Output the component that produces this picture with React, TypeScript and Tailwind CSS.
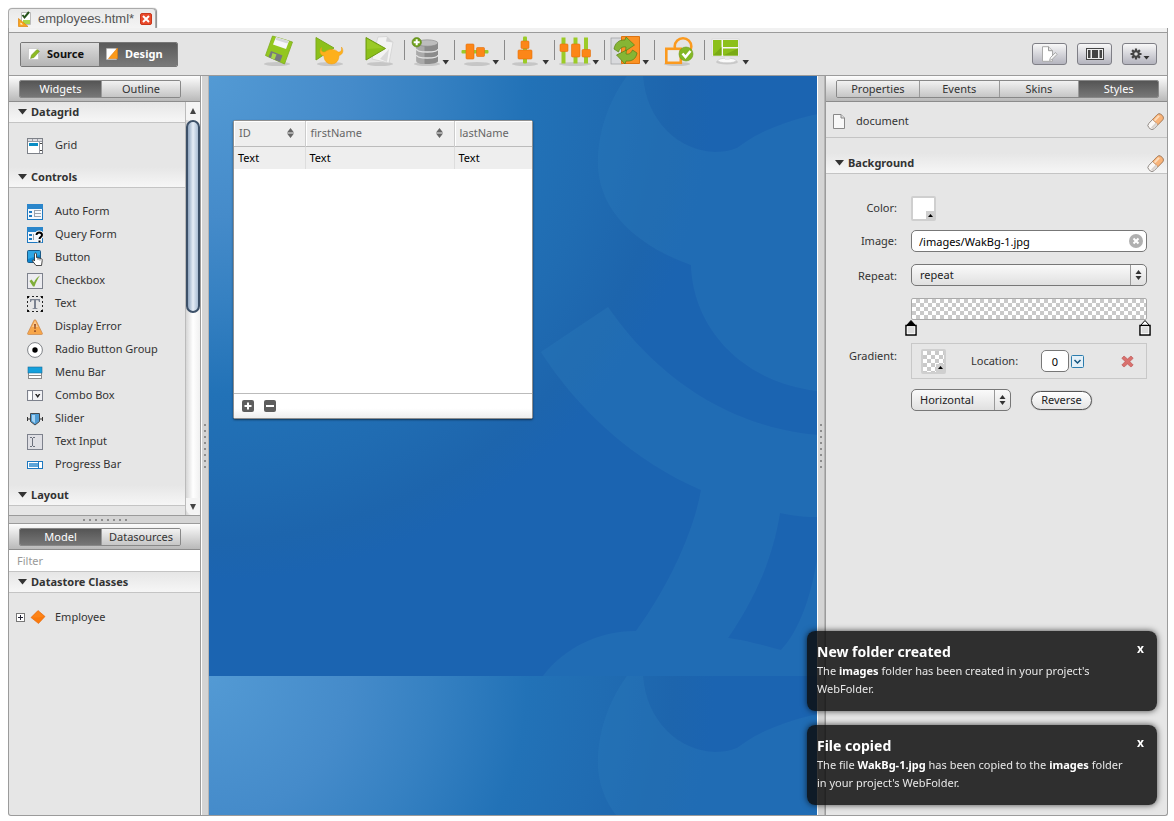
import React, { useState } from "react";

type Icon = () => React.ReactElement;

const Svg16 = ({ children }: { children: React.ReactNode }) => (
  <svg width="16" height="16" viewBox="0 0 16 16" className="shrink-0" aria-hidden="true">
    {children}
  </svg>
);

const GridIcon: Icon = () => (
  <Svg16>
    <rect x=".5" y=".5" width="15" height="15" fill="#fff" stroke="#7d8188" />
    <rect x="1" y="1" width="14" height="2.5" fill="#dcdce0" />
    <path d="M1 3.5h14M5.5 1v2.5M10.5 1v2.5M12.5 3.5V15" stroke="#9a9ca6" fill="none" />
    <rect x="2" y="5" width="9" height="3" fill="#0a8cc4" />
    <path d="M13 6l1-1 1 1M13 12l1 1 1-1" stroke="#444" fill="none" />
  </Svg16>
);
const FormIcon: Icon = () => (
  <Svg16>
    <rect x=".5" y=".5" width="15" height="15" fill="#f4f8fc" stroke="#1d78c0" />
    <rect x="0" y="0" width="16" height="5" fill="#2a86cb" />
    <rect x="2" y="7" width="3" height="2" fill="#1d78c0" />
    <rect x="2" y="11" width="3" height="2" fill="#1d78c0" />
    <path d="M7 6.5h7M7 9.5h7M7 12.5h7M7.5 6v3M7.5 10v3" stroke="#9aa3ad" fill="none" />
  </Svg16>
);
const QueryIcon: Icon = () => (
  <Svg16>
    <rect x=".5" y=".5" width="15" height="15" fill="#f4f8fc" stroke="#1d78c0" />
    <rect x="0" y="0" width="16" height="5" fill="#2a86cb" />
    <rect x="2" y="7" width="3" height="2" fill="#1d78c0" />
    <rect x="2" y="11" width="3" height="2" fill="#1d78c0" />
    <path d="M6.5 7v6" stroke="#9aa3ad" />
    <path d="M9.5 8c0-3.5 5.5-3 5.5 0 0 2-2.5 2-2.5 4M12.5 13.5v2" stroke="#fff" strokeWidth="4" fill="none" />
    <path d="M9.5 8c0-3.500 5.500-3 5.500 0 0 2-2.500 2-2.500 4M12.500 13.500v2" stroke="#000" strokeWidth="2" fill="none" />
  </Svg16>
);
const ButtonIcon: Icon = () => (
  <Svg16>
    <rect x=".5" y=".5" width="13" height="12" rx="1" fill="#0d86cf" stroke="#1c5a86" />
    <path d="M1 1h12v4L1 9z" fill="#2fa6e4" />
    <path d="M7.500 11V4c0-1.300 2-1.300 2 0v3.500l4.500 1c1 .3 1.300 1 1.200 2l-.7 5H9L5.500 11c-.5-1 .8-1.800 2 0z" fill="#fff" stroke="#222" strokeWidth=".8" />
    <path d="M11 8v2M13 8.500v2" stroke="#555" strokeWidth=".7" />
  </Svg16>
);
const CheckIcon: Icon = () => (
  <Svg16>
    <rect x=".5" y=".5" width="15" height="15" fill="#ececf0" stroke="#7d818c" />
    <path d="M2.500 8l2-1.500L7 9.500c1-2.500 3-5.500 6-7-2 3-4 6.500-5.500 11H6z" fill="#7fae3a" />
  </Svg16>
);
const TextIcon: Icon = () => (
  <Svg16>
    <path d="M0 .5h2.500M5 .5h2M9 .5h2M13.500 .5H16M0 15.500h2.500M5 15.500h2M9 15.500h2M13.500 15.500H16" stroke="#222" />
    <path d="M.5 0v2.500M.5 5v2M.5 9v2M.5 13.500V16M15.500 0v2.500M15.500 5v2M15.500 9v2M15.500 13.500V16" stroke="#222" />
    <path d="M0 0h2v2H0zM14 0h2v2h-2zM0 14h2v2H0zM14 14h2v2h-2z" fill="#111" />
    <path d="M3 3h10v3h-1l-.7-1.700H9V12l1.500.4V13h-5v-.6L7 12V4.300H4.700L4 6H3z" fill="#7b8290" />
  </Svg16>
);
const WarnIcon: Icon = () => (
  <Svg16>
    <path d="M8 .7c.6 0 .9.4 1.200 1l6.100 12.500c.4.800 0 1.300-.8 1.300h-13c-.8 0-1.200-.5-.8-1.300L6.800 1.700c.3-.6.6-1 1.200-1z" fill="#f7a64a" stroke="#c9854a" strokeWidth=".7" />
    <path d="M8 1.500l3 6.500H5z" fill="#fcd9ae" opacity=".7" />
    <path d="M7.100 5h1.800l-.4 5h-1zM7.200 11.300h1.600v1.700H7.200z" fill="#8f4a23" />
  </Svg16>
);
const RadioIcon: Icon = () => (
  <Svg16>
    <circle cx="8" cy="8" r="7.400" fill="#fff" stroke="#73767c" strokeWidth=".9" />
    <circle cx="8" cy="8" r="2.700" fill="#000" />
  </Svg16>
);
const MenuIcon: Icon = () => (
  <Svg16>
    <rect x="1.500" y="2.500" width="13" height="11" fill="#fff" stroke="#8a8a8a" />
    <rect x="1" y="2" width="14" height="6" fill="#14a0dc" stroke="#1b6b97" strokeWidth=".6" />
    <path d="M1.500 10.500h13" stroke="#8a8a8a" />
  </Svg16>
);
const ComboIcon: Icon = () => (
  <Svg16>
    <rect x=".5" y="2.500" width="15" height="10" fill="#f2f2f5" stroke="#7d818c" />
    <rect x="2" y="4" width="3" height="7" fill="#fff" />
    <path d="M5.500 3v9" stroke="#7d818c" />
    <path d="M8 6h1.600l1.100 1.600L11.800 6h1.600l-2.700 4z" fill="#222" />
  </Svg16>
);
const SliderIcon: Icon = () => (
  <Svg16>
    <path d="M0 8h16M.5 6v4M15.500 6v4" stroke="#333" />
    <path d="M3.500 2.500h9v8L8 14l-4.500-3.500z" fill="#4e9bd3" stroke="#44484c" />
    <path d="M5 4h3v8L5 10z" fill="#a5d2f2" />
  </Svg16>
);
const InputIcon: Icon = () => (
  <Svg16>
    <rect x=".5" y=".5" width="15" height="15" fill="#dfdfe4" stroke="#7d818c" />
    <path d="M3 3.500h2M6 3.500h2M5.500 4v8M3 12.500h2M6 12.500h2" stroke="#6b707c" fill="none" />
  </Svg16>
);
const ProgressIcon: Icon = () => (
  <Svg16>
    <rect x=".5" y="4.500" width="15" height="7" fill="#fff" stroke="#1d78c0" />
    <rect x="2" y="6" width="9" height="4" fill="#5da4d8" />
    <path d="M11.500 5v6" stroke="#1d78c0" />
  </Svg16>
);

const Shadow = ({ cx = 23, rx = 13 }) => <ellipse cx={cx} cy="31" rx={rx} ry="2" fill="#000" opacity=".13" />;
const Caret = () => <path d="M38.500 27h6.500l-3.250 4.500z" fill="#333" />;

const toolIcons: { name: string; menu: boolean; sep: boolean; art: React.ReactNode }[] = [
  {
    name: "Save", menu: false, sep: false,
    art: (
      <>
        <Shadow cx={23} />
        <path d="M18.500 3l20 6-8 22-19-8.500z" fill="#93c720" stroke="#7eac1e" strokeWidth=".8" />
        <path d="M22 4l13 4-3 8-13-4.500z" fill="#f6f6fa" />
        <path d="M22.500 4.500l12 3.500-1 2.500-12-3.800z" fill="#d5d6dc" />
        <path d="M17 18l11.500 4.500-2.500 6.500L14.500 24z" fill="#77797e" />
        <path d="M18.500 20l4 1.500-2 5-3.500-1.500z" fill="#a9d84a" />
      </>
    ),
  },
  {
    name: "Run project", menu: false, sep: false,
    art: (
      <>
        <Shadow cx={26} />
        <path d="M12 4.500L30 15 12 27z" fill="#8cc01a" stroke="#7aa91c" strokeLinejoin="round" />
        <path d="M17.500 14.500c-1 4 1 5 3.500 4.500 3.500-3.500 10-3.500 13 0 2.500.5 4-1 3.500-5 2.500 3.500 1.500 7.500-2.500 8.500 0 5-3 8.500-7.500 8.500s-7.500-3.500-7.500-8c-4-1-5-5-2.500-8.500z" fill="#fdb01c" stroke="#ef9a10" strokeWidth=".5" />
      </>
    ),
  },
  {
    name: "Run page", menu: false, sep: false,
    art: (
      <>
        <Shadow cx={26} />
        <path d="M24 4l9-.5 4 4.500 2 1-4 21-17-4z" fill="#f3f3f3" stroke="#cfcfcf" strokeWidth=".7" />
        <path d="M33 3.500l-1 5 7 1z" fill="#d2d2d2" />
        <path d="M26 26l9-10-2 13z" fill="#dadada" />
        <path d="M12 4.500l19.500 11L12 27z" fill="#8cc01a" stroke="#6d9a12" strokeLinejoin="round" />
        <path d="M13 6l16 9-16 1z" fill="#a3d02f" opacity=".6" />
      </>
    ),
  },
  {
    name: "New datastore", menu: true, sep: true,
    art: (
      <>
        <Shadow />
        <path d="M12.500 10v18c0 4 21.500 4 21.500 0V10z" fill="#8b8b8b" />
        <path d="M12.500 10v18c0 2 4 3 8 3V12z" fill="#a9a9a9" />
        <ellipse cx="23.200" cy="10" rx="10.700" ry="3.200" fill="#bdbdbd" stroke="#888" strokeWidth=".6" />
        <path d="M12.500 16c0 4 21.500 4 21.500 0M12.500 22c0 4 21.500 4 21.500 0" stroke="#e2e2e2" strokeWidth="1.300" fill="none" />
        <circle cx="12.700" cy="9.300" r="4.700" fill="#6fa01c" stroke="#587f14" strokeWidth=".6" />
        <path d="M12.700 6.300v6M9.700 9.300h6" stroke="#fff" strokeWidth="2" />
      </>
    ),
  },
  {
    name: "Align horizontally", menu: true, sep: true,
    art: (
      <>
        <Shadow />
        <rect x="7.500" y="17" width="27" height="3.500" rx="1" fill="#9ccb28" />
        <rect x="12" y="11" width="8" height="15" rx="1" fill="#fc8618" stroke="#e36f0c" strokeWidth=".6" />
        <rect x="22.500" y="14.500" width="8" height="9" rx="1" fill="#fc8618" stroke="#e36f0c" strokeWidth=".6" />
      </>
    ),
  },
  {
    name: "Align vertically", menu: true, sep: true,
    art: (
      <>
        <Shadow cx={21} />
        <rect x="19" y="3.500" width="4" height="27" rx="1" fill="#9ccb28" />
        <rect x="17" y="8" width="8" height="7.500" rx="1" fill="#fc8618" stroke="#e36f0c" strokeWidth=".6" />
        <rect x="14" y="17" width="14" height="9" rx="1" fill="#fc8618" stroke="#e36f0c" strokeWidth=".6" />
      </>
    ),
  },
  {
    name: "Distribute", menu: true, sep: true,
    art: (
      <>
        <Shadow cx={21} rx={16} />
        <path d="M9.500 4.500v26M21.500 4.500v26M32 4.500v26" stroke="#9ccb28" strokeWidth="4" />
        <rect x="6" y="11" width="8" height="7.500" rx="1" fill="#fc8618" stroke="#e36f0c" strokeWidth=".6" />
        <rect x="17.500" y="11" width="8.500" height="13" rx="1" fill="#fc8618" stroke="#e36f0c" strokeWidth=".6" />
        <rect x="28" y="16.500" width="8.500" height="7.500" rx="1" fill="#fc8618" stroke="#e36f0c" strokeWidth=".6" />
      </>
    ),
  },
  {
    name: "Convert", menu: true, sep: true,
    art: (
      <>
        <rect x="7" y="5" width="11" height="26" fill="#d9dadd" stroke="#9b9da0" strokeWidth=".7" />
        <path d="M17.500 3.500h18v27h-18z" fill="#fb9224" stroke="#dd7411" />
        <path d="M10 16c1-6 5-9.500 11-9l1-3 8.500 8-9 6 .5-4c-4-.5-6 1-7.500 5z" fill="#86b534" stroke="#587f14" strokeWidth=".7" />
        <path d="M33 20c-1 6-5 8.500-11 8l-1 3-8.500-9 10-5-.5 4c3 .500 5-.500 6.500-4z" fill="#86b534" stroke="#587f14" strokeWidth=".7" />
      </>
    ),
  },
  {
    name: "Validate", menu: false, sep: true,
    art: (
      <>
        <Shadow />
        <circle cx="29" cy="13.500" r="8.300" fill="none" stroke="#fb9a1f" strokeWidth="2.600" />
        <rect x="12.300" y="15.800" width="14.500" height="14" fill="#ebebeb" stroke="#fb9a1f" strokeWidth="2.600" />
        <circle cx="32" cy="21" r="7" fill="#83b826" stroke="#6b9a1b" strokeWidth=".6" />
        <path d="M28.500 20.500l3 3.500 5-6" stroke="#fff" strokeWidth="2.600" fill="none" />
      </>
    ),
  },
  {
    name: "Preview", menu: true, sep: true,
    art: (
      <>
        <ellipse cx="23" cy="29" rx="11" ry="2.500" fill="#c9c9c9" />
        <ellipse cx="23" cy="27.500" rx="9" ry="2.300" fill="#fafafa" stroke="#bbb" strokeWidth=".5" />
        <path d="M21 23h4.500v4H21z" fill="#e8e8e8" />
        <rect x="8" y="6" width="27" height="17.500" fill="#f7f7f7" stroke="#d0d0d0" strokeWidth=".6" />
        <path d="M9 7h8.500v15.500H9zM19 7h15v7H19zM19 15.500h15v7H19z" fill="#8cc01a" />
        <path d="M9 22.500L17.500 14v8.500zM19 22.500l15-7v7z" fill="#79aa14" />
      </>
    ),
  },
];

const Triangle = () => (
  <svg width="9" height="6" viewBox="0 0 9 6" className="shrink-0" aria-hidden="true">
    <path d="M0 0h9L4.500 5.500z" fill="#333" />
  </svg>
);

const SectionHeader = ({ children, trailing }: { children: string; trailing?: React.ReactNode }) => (
  <div className="flex h-[21px] items-center justify-between border-b border-[#c4c4c4] bg-linear-to-b from-[#e6e6e6] to-[#f6f6f6] pr-[3px] pl-[9px]">
    <button type="button" className="flex items-center gap-1 font-bold text-[#333]">
      <Triangle />
      {children}
    </button>
    {trailing}
  </div>
);

const SegmentBar = ({ items, active, even }: { items: string[]; active: string; even?: boolean }) => {
  const [current, setCurrent] = useState(active);
  return (
    <div className="h-[26px] border-b border-[#8c8c8c] bg-linear-to-b from-[#fdfdfd] to-[#b9b9b9] pt-1 pr-2 pl-2.5">
      <div className={"flex h-[18px] overflow-hidden rounded-[2px] border border-[#888] " + (even ? "" : "w-[162px]")}>
        {items.map((t) => (
          <button
            key={t}
            type="button"
            onClick={() => setCurrent(t)}
            className={
              "flex-1 text-center leading-4 not-first:border-l not-first:border-[#999] first:flex-[1.04] " +
              (t === current
                ? "bg-linear-to-b from-[#555] to-[#777] text-white"
                : "bg-linear-to-b from-[#f2f2f2] to-[#c6c6c6] text-[#333]")
            }
          >
            {t}
          </button>
        ))}
      </div>
    </div>
  );
};

const WidgetItem = ({ icon: I, label }: { icon: Icon; label: string }) => (
  <li className="flex h-[23px] items-center gap-3 pl-[18px]">
    <I />
    <span>{label}</span>
  </li>
);

const controls: [Icon, string][] = [
  [FormIcon, "Auto Form"],
  [QueryIcon, "Query Form"],
  [ButtonIcon, "Button"],
  [CheckIcon, "Checkbox"],
  [TextIcon, "Text"],
  [WarnIcon, "Display Error"],
  [RadioIcon, "Radio Button Group"],
  [MenuIcon, "Menu Bar"],
  [ComboIcon, "Combo Box"],
  [SliderIcon, "Slider"],
  [InputIcon, "Text Input"],
  [ProgressIcon, "Progress Bar"],
];

const Dots = ({ vertical }: { vertical?: boolean }) => (
  <div className={"flex gap-1 " + (vertical ? "flex-col" : "")}>
    {Array.from({ length: 8 }, (_, i) => (
      <span key={i} className="size-0.5 bg-[#8d8d8d]" />
    ))}
  </div>
);

const VSplitter = () => (
  <div className="flex w-2 shrink-0 items-center justify-center border-x border-l-white border-r-[#b5b5b5] bg-[#d4d4d4]">
    <Dots vertical />
  </div>
);

const Scrollbar = () => (
  <div className="flex w-[15px] shrink-0 flex-col border-l border-[#bbb] bg-linear-to-r from-[#d6d6d6] via-white to-[#f0f0f0]">
    <div className="flex h-[18px] items-center justify-center bg-[#f4f4f4]">
      <svg width="6" height="6" viewBox="0 0 6 6"><path d="M3 0l3 6H0z" fill="#444" /></svg>
    </div>
    <div className="flex-1">
      <div className="h-[51%] rounded-full border-x-2 border-y-2 border-[#3c5068] bg-linear-to-r from-[#8fa5bf] via-[#e6eef7] to-[#a9bdd4]" />
    </div>
    <div className="flex h-[17px] items-center justify-center rounded-b-full bg-[#f4f4f4]">
      <svg width="6" height="6" viewBox="0 0 6 6"><path d="M0 0h6L3 6z" fill="#444" /></svg>
    </div>
  </div>
);

const Eraser = () => (
  <svg width="17" height="17" viewBox="0 0 17 17" className="block" aria-hidden="true">
    <g transform="rotate(-46 8.500 8.500)">
      <rect x="-.5" y="5" width="18" height="7.500" rx="3" fill="#fbf8f6" stroke="#8b8580" strokeWidth=".9" />
      <path d="M8 5h6.500c4 0 4 7.500 0 7.500H8z" fill="#f9b47a" stroke="#b07c50" strokeWidth=".7" />
      <path d="M8.500 6.200h6.500v2H8.500z" fill="#fddcba" />
      <path d="M1 10.500h7" stroke="#d8d2ce" strokeWidth="2" />
    </g>
  </svg>
);

const UpDown = () => (
  <svg width="7" height="10" viewBox="0 0 7 10" aria-hidden="true">
    <path d="M3.500 0L6.500 4H.5zM3.500 10L6.500 6H.5z" fill="#333" />
  </svg>
);

const CanvasBackdrop = () => (
  <svg className="absolute inset-0 size-full" aria-hidden="true">
    <defs>
      <radialGradient id="sky" gradientUnits="userSpaceOnUse" cx="0" cy="0" r="505">
        <stop offset="0" stopColor="#539ad4" />
        <stop offset=".28" stopColor="#458bca" />
        <stop offset=".44" stopColor="#3681c2" />
        <stop offset=".63" stopColor="#2272b7" />
        <stop offset=".78" stopColor="#206cb2" />
        <stop offset=".92" stopColor="#1d65ad" />
        <stop offset="1" stopColor="#1b64b1" />
      </radialGradient>
      <pattern id="tile" width="900" height="600" patternUnits="userSpaceOnUse">
        <rect width="900" height="600" fill="url(#sky)" />
        <g fill="#2a7bbb" fillOpacity=".36" fillRule="evenodd">
          <path d="M418 0C400 25 389 55 389 87C389 125 415 165 482 189C484 250 530 305 608 315L900 315V20L609 38C580 44 550 55 528 72C520 75 513 76 506 76C470 75 437 45 434 0z" />
          <path d="M399 231L332 276C370 335 425 385 492 414C485 455 460 510 427 555C390 555 355 572 334 600H900V359H609C525 352 450 305 399 231zM571 437C590 441 600 441 609 441V477C603 520 590 555 572 574C553 569 535 564 519 562C548 520 564 480 571 437z" />
        </g>
      </pattern>
    </defs>
    <rect width="100%" height="100%" fill="url(#tile)" />
  </svg>
);

const SortIcon = () => (
  <svg width="7" height="10" viewBox="0 0 7 10" aria-hidden="true">
    <path d="M3.500 0L7 4.500H0zM3.500 10L7 5.500H0z" fill="#666" />
    <path d="M0 5h7" stroke="#aaa" strokeWidth=".8" />
  </svg>
);

const DataGrid = () => (
  <div className="absolute top-11 left-6 flex h-[299px] w-[300px] flex-col rounded-[2px] border border-[#8f8f8f] bg-white shadow-[0_1px_2px_rgba(0,0,0,0.5)]">
    <table className="w-full table-fixed border-collapse">
      <colgroup>
        <col className="w-[71px]" />
        <col className="w-[149px]" />
        <col />
      </colgroup>
      <thead>
        <tr className="h-[25px] border-b border-[#bbb] bg-[#eee] text-left text-[#666]">
          {["ID", "firstName", "lastName"].map((h, i) => (
            <th key={h} className="border-white px-[5px] font-normal shadow-[inset_1px_1px_0_#fff] not-first:border-l not-first:border-l-[#ccc]">
              <div className="flex items-center justify-between pr-1.5">
                {h}
                {i < 2 && <SortIcon />}
              </div>
            </th>
          ))}
        </tr>
      </thead>
      <tbody>
        <tr className="h-[23px] bg-[#eee] text-black">
          {[0, 1, 2].map((i) => (
            <td key={i} className="px-1 not-first:border-l not-first:border-[#ddd]">Text</td>
          ))}
        </tr>
      </tbody>
    </table>
    <div className="mt-auto flex h-[25px] items-center gap-2.5 border-t border-[#bbb] bg-linear-to-b from-white from-60% to-[#eee] px-2">
      <button type="button" aria-label="Add row">
        <svg width="12" height="12" viewBox="0 0 12 12" className="block">
          <rect width="12" height="12" rx="2" fill="#5e5e5e" />
          <path d="M6 2.500v7M2.500 6h7" stroke="#fff" strokeWidth="2" />
        </svg>
      </button>
      <button type="button" aria-label="Remove row">
        <svg width="12" height="12" viewBox="0 0 12 12" className="block">
          <rect width="12" height="12" rx="2" fill="#5e5e5e" />
          <path d="M2 6h8" stroke="#fff" strokeWidth="2" />
        </svg>
      </button>
    </div>
  </div>
);

const checker = "bg-[repeating-conic-gradient(#c9c9c9_0_25%,#fff_0_50%)] bg-size-[8px_8px]";

const Swatch = ({ label, checked }: { label: string; checked?: boolean }) => (
  <button type="button" aria-label={label} className="flex size-[25px] shrink-0 rounded-[2px] border-2 border-[#cfcfcf] bg-white">
    <span className={"flex size-full items-end justify-end " + (checked ? checker : "")}>
      <span className="flex size-2 items-center justify-center bg-[#cfcfcf]">
        <svg width="5" height="3" viewBox="0 0 5 3"><path d="M2.500 0L5 3H0z" fill="#000" /></svg>
      </span>
    </span>
  </button>
);

const Picker = ({ id, options, className }: { id: string; options: string[]; className: string }) => (
  <div className={"relative " + className}>
    <select
      id={id}
      aria-label={id}
      className="block h-[22px] w-full appearance-none rounded-[5px] border border-[#777] bg-linear-to-b from-[#fafafa] to-[#e0e0e0] pl-2 text-[#222]"
    >
      {options.map((o) => (
        <option key={o}>{o}</option>
      ))}
    </select>
    <span className="pointer-events-none absolute inset-y-px right-px flex w-4 items-center justify-center border-l border-[#999]">
      <UpDown />
    </span>
  </div>
);

const Handle = ({ solid }: { solid?: boolean }) => (
  <svg width="12" height="16" viewBox="0 1 12 16" aria-hidden="true">
    <path d="M6 1.500l4.500 5h-9z" fill={solid ? "#000" : "#fff"} stroke="#000" />
    <rect x="1" y="6.500" width="10" height="9.500" fill="#ddd" stroke="#000" strokeWidth="1.500" />
    <rect x="2.200" y="7.700" width="7.600" height="7" fill="none" stroke="#fff" strokeWidth=".8" />
  </svg>
);

const ToolButton = ({ label, children }: { label: string; children: React.ReactNode }) => (
  <button type="button" aria-label={label} className="flex h-[22px] w-[35px] items-center justify-center rounded-[3px] border border-[#7f7f86] bg-linear-to-b from-[#f8f8f8] to-[#b4b4be]">
    {children}
  </button>
);

const Toast = ({ title, children, onClose }: { title: string; children: React.ReactNode; onClose: () => void }) => (
  <section role="status" className="h-20 rounded-lg bg-[rgba(12,12,12,0.84)] px-2.5 pt-2.5 text-white shadow-[0_0_6px_rgba(0,0,0,0.7)]">
    <div className="flex items-start justify-between pr-[3px]">
      <h2 className="text-sm leading-[21px] font-bold">{title}</h2>
      <button type="button" aria-label="Close" onClick={onClose} className="text-xs leading-4 font-bold">x</button>
    </div>
    <p className="pr-4 leading-[18px] text-[#e8e8e8]">{children}</p>
  </section>
);

export default function App() {
  const [toasts, setToasts] = useState([true, true]);
  const [mode, setMode] = useState("Design");
  return (
    <div className="flex h-screen flex-col overflow-hidden bg-white pt-2 pr-1.5 pb-[5px] pl-2 font-['Noto_Sans','Open_Sans',sans-serif] text-[11px] text-[#333]">
      <div className="flex shrink-0">
        <div className="flex h-5 w-[148px] items-center gap-1.5 rounded-t-[4px] border border-b-0 border-[#aaa] bg-linear-to-b from-[#e9e9e9] to-[#f4f4f4] pl-[9px] font-['Liberation_Sans',sans-serif] text-[13px] text-[#555] shadow-[1px_0_1px_#888]">
          <svg width="14" height="16" viewBox="0 0 14 16" className="shrink-0" aria-hidden="true">
            <path d="M3.500 1.500h9v12h-9z" fill="#fff" stroke="#bbb" />
            <path d="M5 9h7v4H5z" fill="#a8d84a" />
            <path d="M4.500 4l2 2.500L11 1" stroke="#26521b" strokeWidth="2" fill="none" />
            <path d="M.5 7.500V15.500H10z" fill="#f9a51c" stroke="#dd8412" strokeWidth=".7" />
            <path d="M2.500 11.500v2h2.500z" fill="#fff" />
          </svg>
          <span>employees.html*</span>
          <button type="button" aria-label="Close tab">
            <svg width="12" height="12" viewBox="0 0 12 12" className="block">
              <rect x=".5" y=".5" width="11" height="11" rx="1.500" fill="#ea4a2b" stroke="#c8371c" />
              <path d="M3 3l6 6M9 3L3 9" stroke="#fff" strokeWidth="2" />
            </svg>
          </button>
        </div>
      </div>

      <div className="flex min-h-0 flex-1 flex-col rounded-b-[3px] border-x border-b border-[#9b9b9b] bg-[#e6e6e6]">
        <div className="h-[5px] shrink-0 border-b border-[#9b9b9b] bg-[#f1f1f1]" />
        <header className="flex h-[43px] shrink-0 items-center border-b border-[#9b9b9b] bg-[#e4e4e4] pr-2.5 pl-[11px]">
          <div className="flex h-[25px] w-[158px] overflow-hidden rounded-[2px] border border-[#777] font-bold">
            {["Source", "Design"].map((m) => (
              <button
                key={m}
                type="button"
                onClick={() => setMode(m)}
                className={
                  "flex flex-1 items-center gap-[7px] pl-[7px] " +
                  (m === mode ? "bg-linear-to-b from-[#5a5a5a] to-[#7a7a7a] text-white" : "bg-linear-to-b from-[#dedede] to-[#b4b4b4] text-[#111]")
                }
              >
                <svg width="12" height="12" viewBox="0 0 12 12" aria-hidden="true">
                  <path d="M.5 .5h10v11H.5z" fill="#fff" stroke="#bbb" strokeWidth=".6" />
                  {m === "Source" ? (
                    <path d="M2.500 10.500l1-3.500L9 1.500l2.500 1.800L6 9.500z" fill="#8dbb22" stroke="#6f8a2c" strokeWidth=".5" />
                  ) : (
                    <path d="M2.500 10.500L11.500 0v10.500z" fill="#fb9a1a" stroke="#e07c0c" strokeWidth=".6" />
                  )}
                </svg>
                {m}
              </button>
            ))}
          </div>
          <nav className="ml-[76px] flex h-full">
            {toolIcons.map((t) => (
              <button key={t.name} type="button" aria-label={t.name} className="block h-[42px] w-[50px]">
                <svg width="50" height="42" viewBox="0 0 50 42" className="block">
                  {t.sep && <path d="M.5 7v20" stroke="#8a8a8a" />}
                  {t.art}
                  {t.menu && <Caret />}
                </svg>
              </button>
            ))}
          </nav>
          <div className="ml-auto flex gap-2.5">
            <ToolButton label="New page">
              <svg width="17" height="16" viewBox="0 0 17 16">
                <path d="M1.500 .7h6l4 4v10.600h-10z" fill="#fff" stroke="#aaa" />
                <path d="M7.500 .7v4h4" fill="#e4e4e4" stroke="#999" />
                <path d="M8.500 14.500l1-3 5-5 1.500 2-5 5z" fill="#f4f4f4" stroke="#999" strokeWidth=".8" />
              </svg>
            </ToolButton>
            <ToolButton label="Panels">
              <svg width="18" height="12" viewBox="0 0 18 12">
                <rect x=".5" y=".5" width="17" height="11" fill="#eee" stroke="#444" />
                <path d="M2 2h2.500v8H2zM6 2h6v8H6zM13.500 2H16v8h-2.500z" fill="#444" />
              </svg>
            </ToolButton>
            <ToolButton label="Settings">
              <svg width="20" height="12" viewBox="0 0 20 12">
                <g stroke="#444" strokeWidth="2.200">
                  <path d="M6 .5v11M.5 6h11M2.100 2.100l7.800 7.800M9.900 2.100L2.100 9.900" />
                </g>
                <circle cx="6" cy="6" r="3.700" fill="#444" />
                <circle cx="6" cy="6" r="1.800" fill="#ddd" />
                <path d="M13.500 8h6l-3 3.500z" fill="#333" />
              </svg>
            </ToolButton>
          </div>
        </header>

        <div className="flex min-h-0 flex-1">
          <aside className="flex w-[192px] shrink-0 flex-col border-r border-[#9b9b9b]">
            <SegmentBar items={["Widgets", "Outline"]} active="Widgets" />
            <div className="flex shrink-0">
              <div className="min-w-0 flex-1">
                <SectionHeader>Datagrid</SectionHeader>
                <ul className="pt-[11px] pb-2.5">
                  <WidgetItem icon={GridIcon} label="Grid" />
                </ul>
                <SectionHeader>Controls</SectionHeader>
                <ul className="pt-3 pb-[9px]">
                  {controls.map(([I, label]) => (
                    <WidgetItem key={label} icon={I} label={label} />
                  ))}
                </ul>
                <SectionHeader>Layout</SectionHeader>
                <div className="h-[9px]" />
              </div>
              <Scrollbar />
            </div>
            <div className="flex h-[9px] shrink-0 items-center justify-center border-y border-[#9b9b9b] bg-[#d4d4d4]">
              <Dots />
            </div>
            <SegmentBar items={["Model", "Datasources"]} active="Model" />
            <input
              aria-label="Filter"
              placeholder="Filter"
              className="h-[22px] w-full shrink-0 border-b border-[#c4c4c4] bg-white px-2 placeholder:text-[#999]"
            />
            <SectionHeader>Datastore Classes</SectionHeader>
            <div className="flex items-center pt-4 pl-[7px]">
              <svg width="9" height="9" viewBox="0 0 9 9" aria-hidden="true">
                <rect x=".5" y=".5" width="8" height="8" fill="#fff" stroke="#777" />
                <path d="M2 4.500h5M4.500 2v5" stroke="#223" />
              </svg>
              <svg width="16" height="16" viewBox="0 0 16 16" className="mr-[9px] ml-[5px]" aria-hidden="true">
                <path d="M8 1.500L15 7.500 8.500 14.500 1 8.500z" fill="#fb7a0c" stroke="#e2650a" strokeWidth=".6" />
                <path d="M8 2l6 5.500-6 1-6 0z" fill="#ff8a22" opacity=".6" />
              </svg>
              Employee
            </div>
          </aside>
          <VSplitter />

          <main className="relative min-w-0 flex-1 overflow-hidden">
            <CanvasBackdrop />
            <DataGrid />
          </main>

          <VSplitter />
          <aside className="w-[342px] shrink-0 border-l border-[#9b9b9b]">
            <SegmentBar items={["Properties", "Events", "Skins", "Styles"]} active="Styles" even />
            <div className="flex h-9 items-center gap-[11px] border-b border-[#c4c4c4] pt-1 pr-[3px] pl-[7px]">
              <svg width="12" height="15" viewBox="0 0 12 15" aria-hidden="true">
                <path d="M.5 .5h7.500l3.500 3.500v10.500H.5z" fill="#f8f8f8" stroke="#888" />
                <path d="M8 .5v3.500h3.500" fill="#ddd" stroke="#888" />
              </svg>
              <span className="flex-1">document</span>
              <button type="button" aria-label="Clear document styles"><Eraser /></button>
            </div>
            <div className="pt-[15px]">
              <SectionHeader trailing={<button type="button" aria-label="Clear background"><Eraser /></button>}>Background</SectionHeader>
            </div>

            <form className="grid grid-cols-[71px_1fr] gap-x-3.5 pt-[22px] pr-5" onSubmit={(e) => e.preventDefault()}>
              <span className="pt-1 text-right">Color:</span>
              <Swatch label="Color" />

              <label htmlFor="image" className="pt-3 text-right">Image:</label>
              <div className="relative pt-[9px]">
                <input
                  id="image"
                  defaultValue="/images/WakBg-1.jpg"
                  className="block h-[22px] w-full rounded-[5px] border border-[#777] bg-white px-[7px] text-black"
                />
                <button type="button" aria-label="Clear image" className="absolute right-1 bottom-1">
                  <svg width="14" height="14" viewBox="0 0 14 14" className="block">
                    <circle cx="7" cy="7" r="7" fill="#b0b0b0" />
                    <path d="M4.500 4.500l5 5M9.500 4.500l-5 5" stroke="#fff" strokeWidth="2" />
                  </svg>
                </button>
              </div>

              <label htmlFor="repeat" className="pt-4 text-right">Repeat:</label>
              <Picker id="repeat" options={["repeat", "repeat-x", "repeat-y", "no-repeat"]} className="mt-3" />

              <span />
              <div className="pt-3">
                <div className={"h-[22px] rounded-[2px] border border-[#aaa] " + checker} />
                <div className="-mr-1 -ml-1.5 flex justify-between">
                  <Handle solid />
                  <Handle />
                </div>
              </div>

              <span className="pt-3 text-right">Gradient:</span>
              <div className="pt-[7px]">
                <div className="flex h-9 items-center border border-[#c8c8c8] pr-3 pl-[9px]">
                  <Swatch label="Gradient stop color" checked />
                  <label htmlFor="location" className="ml-[25px]">Location:</label>
                  <input id="location" defaultValue="0" className="ml-auto h-[22px] w-7 rounded-[5px] border border-[#777] bg-white text-center text-black" />
                  <button type="button" aria-label="Location presets" className="mr-[37px] ml-0.5">
                    <svg width="13" height="13" viewBox="0 0 13 13" className="block">
                      <rect x=".5" y=".5" width="12" height="12" rx="1" fill="#e4f0f8" stroke="#2b7cad" />
                      <path d="M3.500 5l3 3 3-3" stroke="#14527c" strokeWidth="1.500" fill="none" />
                    </svg>
                  </button>
                  <button type="button" aria-label="Delete stop">
                    <svg width="13" height="13" viewBox="0 0 13 13" className="block">
                      <path d="M3 1l3.500 3L10 1l2.200 2.300-3.400 3.200 3.400 3.500L10 12 6.500 9 3 12 .8 10l3.400-3.500L.8 3.300z" fill="#d9716e" stroke="#b8504f" strokeWidth=".6" />
                    </svg>
                  </button>
                </div>
              </div>

              <span />
              <div className="flex items-center gap-5 pt-2.5">
                <Picker id="direction" options={["Horizontal", "Vertical"]} className="w-[100px]" />
                <button type="button" className="h-[19px] w-[61px] rounded-full border border-[#555] bg-linear-to-b from-white to-[#e4e4e4] leading-4 text-[#222] shadow-[0_0_1px_#555]">
                  Reverse
                </button>
              </div>
            </form>
          </aside>
        </div>
      </div>

      <div className="fixed right-[17px] bottom-4 flex w-[350px] flex-col gap-3.5">
        {toasts[0] && (
          <Toast title="New folder created" onClose={() => setToasts([false, toasts[1]])}>
            The <b className="text-white">images</b> folder has been created in your project's WebFolder.
          </Toast>
        )}
        {toasts[1] && (
          <Toast title="File copied" onClose={() => setToasts([toasts[0], false])}>
            The file <b className="text-white">WakBg-1.jpg</b> has been copied to the <b className="text-white">images</b> folder in your project's WebFolder.
          </Toast>
        )}
      </div>
    </div>
  );
}
